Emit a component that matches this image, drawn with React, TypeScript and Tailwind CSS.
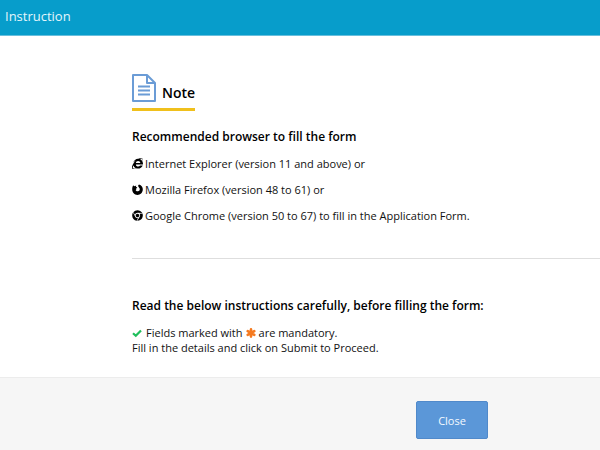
import type { ReactNode } from 'react'
import { FaChrome, FaInternetExplorer } from 'react-icons/fa'

function FirefoxIcon({ className }: { className?: string }) {
  return (
    <svg viewBox="0 0 22 22" className={className} fill="currentColor" aria-hidden="true">
      <path d="M2.4 2.6 4.2 4.4C5.4 3.6 7 3.2 8.6 3.4L7.6 5.6 10.6 7.2 8.2 9.4 8.6 11.4 7.2 12C8.2 14.4 11 15.2 13 14.2 15.4 13.2 16.2 10.6 15 8.4 14.2 7 13 6.2 12.4 4.6 12 3.2 12.6 1.8 14 .8 19 1.8 22 6.4 21.6 11.4 21.2 17.4 16.6 21.8 11 21.8 4.8 21.8.4 17 .4 11.2.4 8 .8 5 2.4 2.6Z" />
    </svg>
  )
}

function CheckIcon() {
  return (
    <svg viewBox="0 0 10 10" className="mr-1 size-[10px] text-[#1fbf5c]" aria-hidden="true">
      <path d="m1 5.2 2.8 2.6L9 2.4" fill="none" stroke="currentColor" strokeWidth="2.2" />
    </svg>
  )
}

function AsteriskIcon() {
  return (
    <svg viewBox="0 0 10 10" className="mx-[3px] size-[10px] text-[#f57a1f]" aria-hidden="true">
      <path
        d="M5 1.4v7.2M1.7 3.1l6.6 3.8M8.3 3.1l-6.6 3.8"
        fill="none"
        stroke="currentColor"
        strokeWidth="2.6"
        strokeLinecap="round"
      />
    </svg>
  )
}

function DocumentIcon() {
  return (
    <svg
      viewBox="0 0 24 28"
      className="h-7 w-6 text-[#6b9cd6]"
      fill="none"
      stroke="currentColor"
      strokeWidth="2"
      strokeLinejoin="round"
      aria-hidden="true"
    >
      <path d="M1 1h14l8 8v18H1Z" />
      <path d="M15 1v8h8" />
      <path d="M6 12.5h12M6 16.5h12M6 20.5h12" strokeWidth="1.8" />
    </svg>
  )
}

const browsers: { icon: ReactNode; text: string }[] = [
  {
    icon: <FaInternetExplorer className="size-[11px]" />,
    text: 'Internet Explorer (version 11 and above) or',
  },
  {
    icon: <FirefoxIcon className="size-[11px]" />,
    text: 'Mozilla Firefox (version 48 to 61) or',
  },
  {
    icon: <FaChrome className="size-[11px]" />,
    text: 'Google Chrome (version 50 to 67) to fill in the Application Form.',
  },
]

export default function App() {
  return (
    <div className="min-h-screen flex flex-col bg-white font-['Open_Sans',sans-serif] text-[11px] leading-[15px] text-[#111]">
      <header className="h-9 shrink-0 border-b border-[#68bfdd] bg-[#079dcb] px-[5px] pt-[7px]">
        <h1 className="text-[13px] leading-[18px] text-[#e4f6fc]">Instruction</h1>
      </header>

      <main className="pl-[132px] pt-[38px] pb-[22px]">
        <div className="flex">
          <div className="flex items-end gap-[6px] border-b-3 border-[#f0c01c] pb-[6px]">
            <DocumentIcon />
            <h2 className="text-sm leading-[18px] font-semibold text-black">Note</h2>
          </div>
        </div>

        <h3 className="mt-[17px] text-xs leading-[18px] font-semibold text-black">
          Recommended browser to fill the form
        </h3>
        <ul className="mt-[10px] space-y-[11px]">
          {browsers.map((browser) => (
            <li key={browser.text} className="flex items-center gap-[2px]">
              <span className="shrink-0 text-black">{browser.icon}</span>
              {browser.text}
            </li>
          ))}
        </ul>

        <hr className="mt-[35px] border-[#dedede]" />

        <h3 className="mt-[38px] text-xs leading-[18px] font-semibold text-black">
          Read the below instructions carefully, before filling the form:
        </h3>
        <p className="mt-[10px] flex items-center">
          <CheckIcon />
          Fields marked with
          <AsteriskIcon />
          are mandatory.
        </p>
        <p>Fill in the details and click on Submit to Proceed.</p>
      </main>

      <footer className="flex grow items-start justify-end border-t border-[#ececec] bg-[#f6f6f6] pt-[23px] pr-28">
        <button
          type="button"
          className="h-[38px] w-[72px] rounded-xs border border-[#5089ca] bg-[#5b97d8] text-[11px] text-[#f4f9ff]"
        >
          Close
        </button>
      </footer>
    </div>
  )
}
